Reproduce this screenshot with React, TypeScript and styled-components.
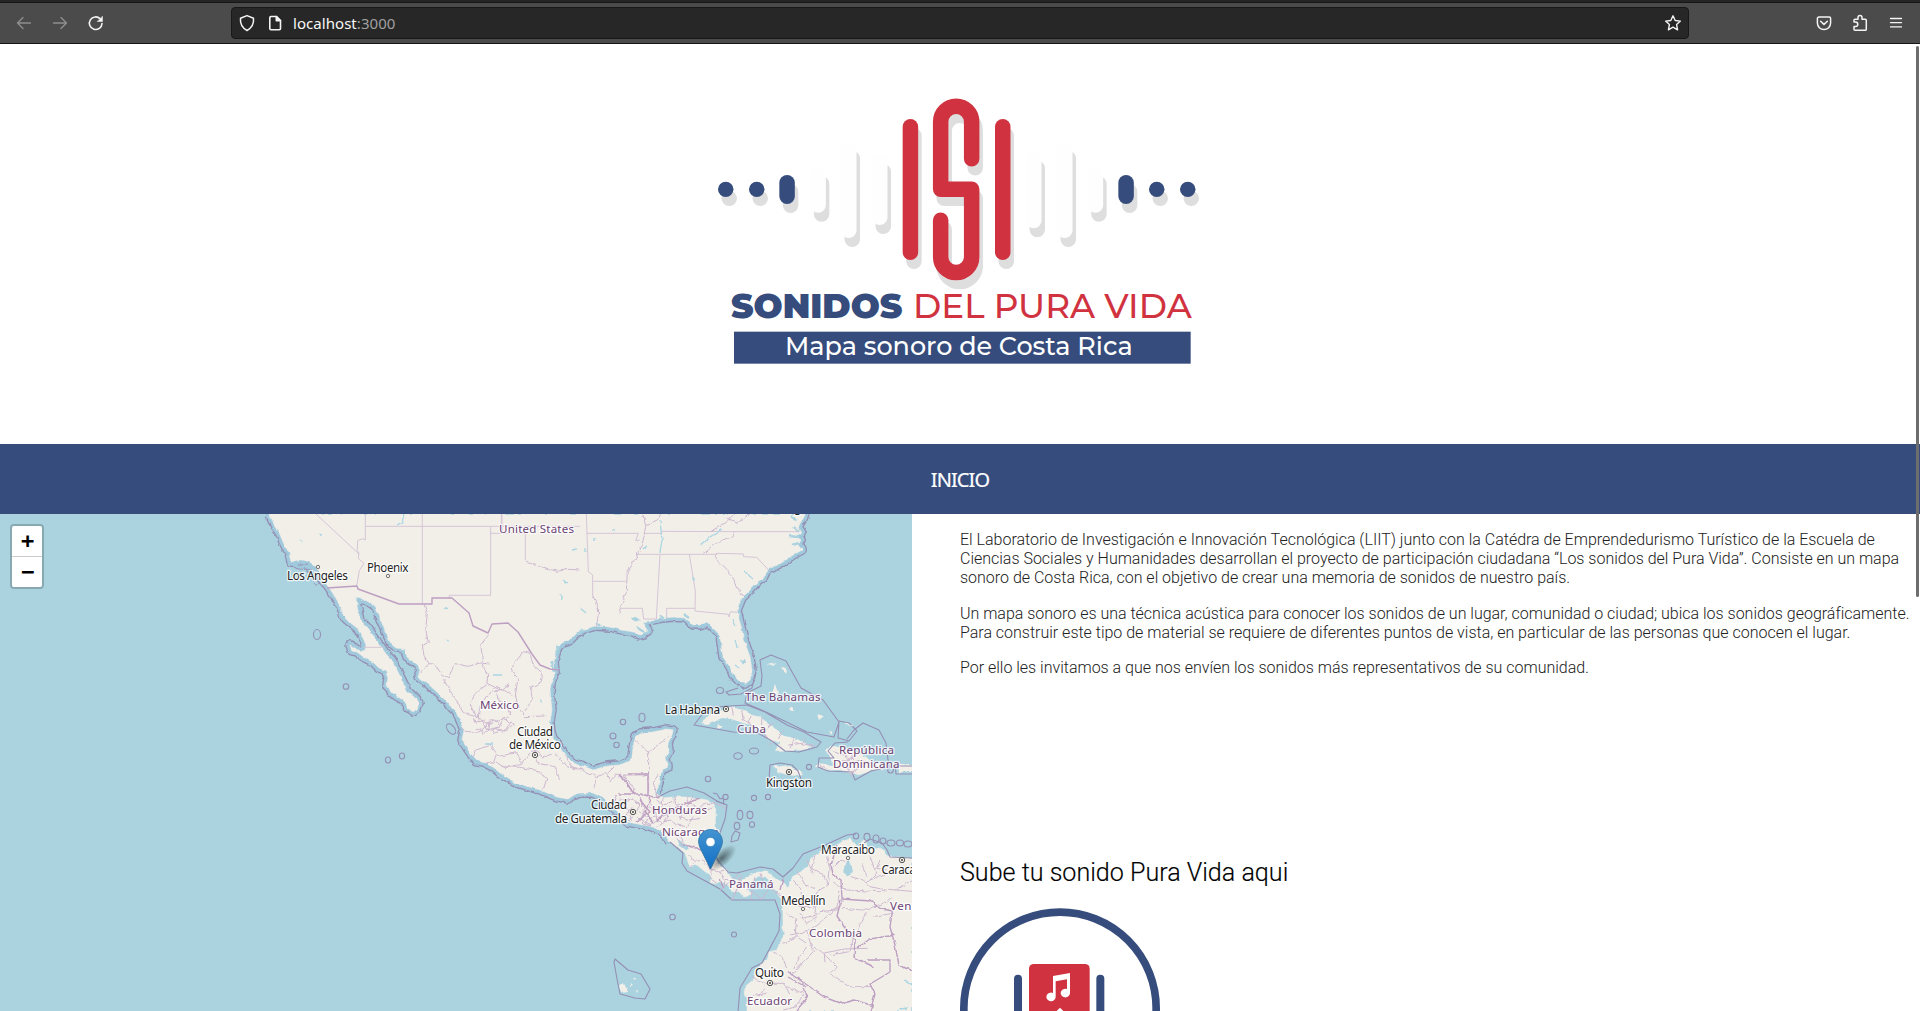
import React from 'react';
import styled, { createGlobalStyle } from 'styled-components';

const NAVY = '#354c7c';
const RED = '#d13240';
const WATER = '#aad3df';
const LAND = '#f2efe9';
const SEA_LINE = '#958fb4';
const STATE_LINE = '#cdb8d0';

const GlobalStyle = createGlobalStyle`
  * { box-sizing: border-box; }
  html, body { margin: 0; padding: 0; background: #fff; overflow: hidden; }
`;

const Window = styled.div`
  position: relative;
  display: flex;
  flex-direction: column;
  width: 1920px;
  height: 1011px;
  overflow: hidden;
  background: #fff;
  font-family: Roboto, 'Liberation Sans', sans-serif;
`;

/* ---------- browser chrome ---------- */

const Toolbar = styled.div`
  flex: none;
  display: flex;
  align-items: center;
  height: 44px;
  padding: 3px 15px 0 15px;
  background: #4b4b4b;
  border-bottom: 1px solid #151515;
  box-shadow: inset 0 2px 0 #252525, inset 0 3px 0 #161616;
`;

const NavButtons = styled.div`
  display: flex;
  align-items: center;
  gap: 18px;
  width: 216px;
`;

const Icon = styled.svg<{ $size?: number; $color?: string; $line?: number }>`
  flex: none;
  display: block;
  width: ${(p) => p.$size ?? 18}px;
  height: ${(p) => p.$size ?? 18}px;
  fill: none;
  stroke: ${(p) => p.$color ?? '#f4f4f4'};
  stroke-width: ${(p) => p.$line ?? 1.3};
  stroke-linecap: round;
  stroke-linejoin: round;
`;

const AddressBar = styled.div`
  display: flex;
  align-items: center;
  width: 1458px;
  height: 32px;
  padding: 0 6px 0 6px;
  background: #272727;
  border: 1px solid #181818;
  border-radius: 4px;
`;

const SiteIcons = styled.div`
  display: flex;
  gap: 10px;
  width: 55px;
`;

const Address = styled.span`
  flex: 1;
  color: #f7f7f7;
  font: 400 15px/20px 'Noto Sans', 'Open Sans', sans-serif;
  letter-spacing: 0.05px;
`;

const Port = styled.span`
  color: #a0a0a0;
`;

const ToolButtons = styled.div`
  display: flex;
  align-items: center;
  gap: 18px;
  margin-left: auto;
`;

const ScrollThumb = styled.div`
  position: absolute;
  top: 46px;
  right: 1px;
  width: 3px;
  height: 551px;
  border-radius: 2px;
  background: #6d6d6d;
`;

/* ---------- page ---------- */

const Header = styled.header`
  flex: none;
  display: flex;
  justify-content: center;
  height: 400px;
  padding-top: 36px;
`;

const Logo = styled.svg`
  display: block;
  width: 520px;
  height: 300px;
  font-family: Montserrat, Inter, sans-serif;
`;

const Nav = styled.nav`
  flex: none;
  display: flex;
  align-items: center;
  justify-content: center;
  height: 70px;
  background: ${NAVY};
`;

const NavLink = styled.a`
  color: #fff;
  font: 400 20px/28px 'Noto Sans', 'Open Sans', sans-serif;
  letter-spacing: -0.9px;
  padding-top: 1px;
  -webkit-text-stroke: 0.2px #fff;
`;

const Content = styled.main`
  flex: 1;
  min-height: 0;
  display: flex;
  gap: 48px;
`;

const MapPane = styled.section`
  position: relative;
  flex: none;
  width: 912px;
  height: 497px;
  overflow: hidden;
  background: ${WATER};
`;

const MapDrawing = styled.svg`
  display: block;
  width: 912px;
  height: 497px;
`;

const ZoomControl = styled.div`
  position: absolute;
  top: 10px;
  left: 10px;
  border: 2px solid rgba(0, 0, 0, 0.2);
  border-radius: 4px;
  background-clip: padding-box;
`;

const ZoomButton = styled.button<{ $last?: boolean }>`
  display: block;
  width: 30px;
  height: ${(p) => (p.$last ? 30 : 31)}px;
  padding: 0;
  border: 0;
  border-bottom: ${(p) => (p.$last ? '0' : '1px solid #ccc')};
  border-radius: ${(p) => (p.$last ? '0 0 2px 2px' : '2px 2px 0 0')};
  background: #fff;
  color: #000;
  font: bold 22px/30px 'DejaVu Sans Mono', monospace;
  text-indent: 1px;
`;

const Side = styled.section`
  flex: 1;
  display: flex;
  flex-direction: column;
  padding-top: 16px;
`;

const Intro = styled.div`
  flex: none;
  height: 328px;
`;

const Paragraph = styled.p`
  margin: 0 0 16px;
  color: #212121;
  font-size: 16px;
  font-weight: 300;
  line-height: 19.2px;
  letter-spacing: -0.008px;
  white-space: nowrap;
`;

const Heading = styled.h2`
  flex: none;
  margin: 0 0 20px;
  color: #000;
  font-size: 25.1px;
  font-weight: 300;
  line-height: 30px;
  -webkit-text-stroke: 0.15px #000;
`;

const UploadBadge = styled.svg`
  display: block;
  flex: none;
  width: 200px;
  height: 200px;
`;

/* ---------- logo ---------- */

type Bar = { x: number; y: number; h: number; fill: string };

const bars: Bar[] = [
  { x: 54, y: 305, h: 46, fill: NAVY },
  { x: 147, y: 305, h: 46, fill: NAVY },
  { x: 238, y: 285, h: 87, fill: NAVY },
  { x: 331, y: 262, h: 136, fill: '#fefefe' },
  { x: 423, y: 185, h: 289, fill: '#fefefe' },
  { x: 516, y: 225, h: 210, fill: '#fefefe' },
  { x: 608, y: 117, h: 423, fill: RED },
  { x: 885, y: 117, h: 423, fill: RED },
  { x: 978, y: 215, h: 230, fill: '#fefefe' },
  { x: 1071, y: 185, h: 289, fill: '#fefefe' },
  { x: 1163, y: 262, h: 136, fill: '#fefefe' },
  { x: 1255, y: 285, h: 87, fill: NAVY },
  { x: 1347, y: 305, h: 46, fill: NAVY },
  { x: 1440, y: 305, h: 46, fill: NAVY },
];

const S_PATH = 'M815 236V125A46.5 46.5 0 0 0 722 125V328H815V531A46.5 46.5 0 0 1 722 531V421';

const SiteLogo = () => (
  <Logo viewBox="0 0 1560 900">
    <g transform="translate(10.500 27)" fill="#dedede">
      {bars.map((b) => (
        <rect key={b.x} x={b.x} y={b.y} width="46.500" height={b.h} rx="23.200" />
      ))}
      <path d={S_PATH} fill="none" stroke="#dedede" strokeWidth="46.500" strokeLinecap="round" strokeLinejoin="round" />
    </g>
    {bars.map((b) => (
      <rect key={b.x} x={b.x} y={b.y} width="46.500" height={b.h} rx="23.200" fill={b.fill} />
    ))}
    <path d={S_PATH} fill="none" stroke={RED} strokeWidth="46.500" strokeLinecap="round" strokeLinejoin="round" />
    <text x="93" y="713" fontSize="102" fontWeight="900" fill={NAVY} textLength="514" lengthAdjust="spacingAndGlyphs">SONIDOS</text>
    <text x="639" y="713" fontSize="102" fontWeight="500" fill={RED} textLength="836" lengthAdjust="spacingAndGlyphs">DEL PURA VIDA</text>
    <rect x="102" y="755" width="1370" height="96" fill={NAVY} />
    <text x="255" y="824" fontSize="75" fontWeight="500" fill="#fff" textLength="1043" lengthAdjust="spacingAndGlyphs">Mapa sonoro de Costa Rica</text>
  </Logo>
);

/* ---------- map geometry ---------- */

const PACIFIC_NORTH =
  '268,514 271,517 275,527 279,532 283,542 289,553 291,562 297,563 302,562 308,565 313,570 320,577 327,585 332,592 337,600 342,610 344,617 347,620 352,624 357,628 363,638 366,645 365,650 360,652 355,648 350,645 352,651 357,652 365,658 373,662 379,668 385,670 388,677 387,687 391,691 395,695 403,700 408,708 413,712 417,709 419,703 416,698 413,695 407,692 405,686 402,680 397,670 392,660 386,654 382,648 375,638 368,628 360,620 358,610 356,600 357,597 367,601 376,607 378,614 380,620 384,627 385,632 388,637 390,642 397,648 405,649 407,657 418,665 420,671 418,677 427,683 437,692 447,702 452,708 457,713 461,723 464,730 462,740 467,748 473,757 477,761 483,762 493,767 500,773 507,777 514,782 523,785 540,790 557,797 568,799 574,795 580,793 593,793 603,798 613,807 627,822 643,825 653,827 662,832 670,842';

const PACIFIC_SOUTH =
  '678,847 685,853 688,862 690,867 697,865 703,870 712,877 710,882 716,884 722,882 728,885 733,892 738,891 745,897 752,895 747,888 748,883 752,880 758,876 767,878 771,883 772,889 777,892 782,900 783,913 783,927 785,934 780,942 777,950 769,952 768,958 762,963 755,970 753,980 748,984 744,992 747,1001 747,1011';

const CARIBBEAN_SOUTH =
  '912,1011 912,860 900,857 888,857 885,851 880,848 868,850 866,842 862,841 860,847 853,843 850,838 842,842 833,847 820,852 812,858 807,867 798,873 793,877 788,888 782,882 773,877 767,872 758,872 750,875 742,880 733,880 727,872 717,862 713,853 713,840 716,830 715,818 717,810 713,803 707,800 700,799 687,797 673,797 663,798';

const GULF =
  '655,795 658,787 660,777 662,770 668,767 666,757 669,750 668,743 672,735 673,730 667,729 653,732 640,733 635,737 633,748 632,758 627,762 620,765 607,766 593,770 583,766 573,763 565,755 560,748 553,738 551,732 550,723 551,715 552,710 550,690 552,680 555,673 554,660 558,647 563,642 570,640 577,633 582,630 595,626 610,627 622,630 633,632 640,635 643,634 648,631 643,622 653,620 663,618 673,617 685,618 689,621 693,625 700,625 707,622 713,628 720,635 721,643 723,657 730,667 733,675 740,682 745,684 750,680 752,670 750,657 745,643 741,627 737,610 742,598 750,590 756,583 763,578 767,570 783,562 793,555 802,550 798,545 801,540 797,537 802,533 798,527 804,517 805,514';

const Coast = ({ points }: { points: string }) => (
  <>
    <polyline points={points} fill="none" stroke={SEA_LINE} strokeWidth="9.800" strokeLinejoin="round" />
    <polyline points={points} fill="none" stroke="#a0c9dc" strokeWidth="7.200" strokeLinejoin="round" />
  </>
);

type LabelSpec = { text: string; x: number; y: number; w?: number; country?: boolean };

const labels: LabelSpec[] = [
  { text: 'Washington', x: 757, y: 512, w: 61 },
  { text: 'United States', x: 499, y: 533, w: 75, country: true },
  { text: 'Los Angeles', x: 287, y: 580, w: 61 },
  { text: 'Phoenix', x: 367, y: 572, w: 41.5 },
  { text: 'México', x: 480, y: 708.5, w: 39, country: true },
  { text: 'Ciudad', x: 517, y: 735.5, w: 36 },
  { text: 'de México', x: 509, y: 748.5, w: 52 },
  { text: 'The Bahamas', x: 745, y: 701, w: 75.5, country: true },
  { text: 'La Habana', x: 665, y: 713.5, w: 55 },
  { text: 'Cuba', x: 737, y: 733, w: 29, country: true },
  { text: 'República', x: 839, y: 754, w: 55, country: true },
  { text: 'Dominicana', x: 833, y: 767.5, w: 66.5, country: true },
  { text: 'Kingston', x: 766, y: 786.5, w: 46 },
  { text: 'Ciudad', x: 591, y: 809, w: 36 },
  { text: 'de Guatemala', x: 555, y: 822.5, w: 72 },
  { text: 'Honduras', x: 652, y: 813.5, w: 55, country: true },
  { text: 'Nicaragua', x: 662, y: 836, w: 57, country: true },
  { text: 'Panamá', x: 729, y: 888, w: 44.5, country: true },
  { text: 'Maracaibo', x: 821, y: 854, w: 54 },
  { text: 'Caracas', x: 881.5, y: 874, w: 39.5 },
  { text: 'Venezuela', x: 890, y: 910, w: 59, country: true },
  { text: 'Medellín', x: 781, y: 905, w: 44.5 },
  { text: 'Colombia', x: 809, y: 936.5, w: 53, country: true },
  { text: 'Quito', x: 755, y: 976.5, w: 29 },
  { text: 'Ecuador', x: 747, y: 1004.5, w: 45, country: true },
];

const MapLabel = styled.text<{ $country?: boolean }>`
  font: 400 ${(p) => (p.$country ? 11.6 : 11.8)}px 'Noto Sans', 'Open Sans', sans-serif;
  fill: ${(p) => (p.$country ? '#6b4273' : '#222')};
  stroke: rgba(255, 255, 255, 0.75);
  stroke-width: 2.6px;
  stroke-linejoin: round;
  paint-order: stroke;
`;

const capitals = [[535, 755], [726, 709], [789, 772], [633, 812], [902, 860], [770, 983]];
const cities = [[318, 567], [388, 576], [848, 858], [803, 909]];

const islets = [
  [317, 634.5, 3.5, 5], [346, 686.5, 2.8, 2.8], [402, 756, 2.6, 3], [388, 760, 2.6, 3],
  [623, 722, 2.7, 2.7], [642, 717.5, 3, 4.2], [613, 736, 3, 3], [616.5, 745, 2.7, 2.7],
  [720, 690.5, 3.6, 3], [738, 756, 4.2, 3.2], [754, 751, 4.6, 3], [809, 767, 2.6, 2.6],
  [708, 779, 2.7, 2.7], [725.5, 797, 2.6, 2.6], [754, 798, 2.6, 2.6], [768, 797, 2.6, 2.6],
  [740, 815, 2.8, 4.6], [750, 815, 3, 3.6], [737, 826, 2.8, 3.6], [752, 824.5, 2.6, 2.8],
  [672.5, 917, 2.8, 2.8], [734, 934.5, 2.5, 2.5], [890.5, 770, 2.8, 3],
  [856, 836, 2.7, 3], [867, 837, 3, 3.6], [876, 839, 3, 4], [883, 841, 3, 3], [891, 843, 4, 3], [900, 843, 3.5, 3], [908, 844, 4, 3],
];

const WorldMap = () => (
  <MapDrawing viewBox="0 514 912 497">
    <defs>
      <filter id="rough" filterUnits="userSpaceOnUse" x="0" y="500" width="930" height="530">
        <feTurbulence type="fractalNoise" baseFrequency="0.16" numOctaves="2" seed="4" result="n" />
        <feDisplacementMap in="SourceGraphic" in2="n" scale="3.500" xChannelSelector="R" yChannelSelector="G" />
      </filter>
      <filter id="roughDetail" filterUnits="userSpaceOnUse" x="0" y="0" width="1560" height="840">
        <feTurbulence type="fractalNoise" baseFrequency="0.06" numOctaves="2" seed="9" result="n" />
        <feDisplacementMap in="SourceGraphic" in2="n" scale="12" xChannelSelector="R" yChannelSelector="G" />
      </filter>
      <linearGradient id="pin" x1="0" y1="0" x2="0" y2="1">
        <stop offset="0" stopColor="#4394d0" />
        <stop offset="1" stopColor="#126fc6" />
      </linearGradient>
      <linearGradient id="pinEdge" x1="0" y1="0" x2="0" y2="1">
        <stop offset="0" stopColor="#3883b7" />
        <stop offset="1" stopColor="#2e6c97" />
      </linearGradient>
      <radialGradient id="pinShadow">
        <stop offset="0" stopColor="#000" stopOpacity="0.5" />
        <stop offset="1" stopColor="#000" stopOpacity="0" />
      </radialGradient>
    </defs>

    <rect y="514" width="912" height="497" fill={WATER} />

    <g fill="none" stroke={SEA_LINE} strokeWidth="1.100">
      {islets.map(([cx, cy, rx, ry]) => (
        <ellipse key={`${cx}-${cy}`} cx={cx} cy={cy} rx={rx} ry={ry} />
      ))}
      <ellipse cx="451" cy="729" rx="3.500" ry="6" transform="rotate(-38 451 729)" />
    </g>

    <g filter="url(#rough)">
      <Coast points={PACIFIC_NORTH} />
      <Coast points={GULF} />
      <polygon points={`${PACIFIC_NORTH} ${PACIFIC_SOUTH} ${CARIBBEAN_SOUTH} ${GULF}`} fill={LAND} stroke={LAND} strokeWidth="0.600" />
      {/* lakes and lagoons */}
      <path d="M848 859l4 8 1 6-5 3-5-4 2-6zM677 839l7 4 5 6-3 1-7-5zM741 660l4-1 1 4-3 2zM631 618l5-1 4 3-6 2z" fill={WATER} />
      <path d="M552 660l2 12M559 645l-3 8M583 629l-5 6M596 622l4 4M636 627l8 5M644 634l5 -2M660 616l5 3M683 614l6 4M789 536l9 1M792 545l7-2M794 527l5 5M790 516l7 4" stroke={WATER} strokeWidth="2.400" fill="none" />
      <path d="M291 563c5-4 16-4 24 3l5 8-9-5-18-1z" fill="#a0c9dc" />
      <path d="M294 567c5 4 12 1 18 3M313 580c1 4 7 7 6 1M298 565l10 0" stroke={SEA_LINE} fill="none" />
      {/* Cuba, Hispaniola, Jamaica, Puerto Rico */}
      <path d="M701 724l6-8 8-4 8-2 9-3 12 3 8 5 9 2 6 6 9 6 9 7 12 3 10 5 4 4-8 2-28 2 5-9-12-4-5-8-8-5-12-3-12-4-9-1-7 3-7 4z" fill={LAND} />
      <path d="M718 724l5 3-3 3-3-2zM774 766l12 0 13 4 4 5-6 1-10-1-9-3zM826 749l8-3 12 3 9 3 10 4 6 5 13 5-1 3-12 2-12 4-11-3-9-2-12 1-11-5 2-3 14 2-1-6zM899 764h14v8h-14z" fill={LAND} />
    </g>

    {/* maritime limits */}
    <g fill="none" stroke={SEA_LINE} strokeWidth="1.100" strokeLinejoin="round">
      <path d="M670 842l13 11-1 10 5 8 33 18 12 11h43l5 14-1 17-17 32-10 5-12 20-2 24" />
      <path d="M660 796l10-5 17-4 17 6 13 8 10 4-2 14-8 22M714 853l5 9 9 10 9 1 23-6 13 2 10 8 10-9 10-14 20-8 24-11 9-1M864 843l6-4 12 4 5 7 3 7 22 1" />
      <path d="M694 725l10-13 10-5 33-2 18 7 22 13 17 7 17 10-4 5-18 5-14-1-13-10-14-8-25-1-22-4zM760 660l11-5 15 6 15 27 22 12 16 22-5 15-27-5-41-20-21-9 2-10 14-7 1-10zM839 721l10 2 8 8-8 10-11-3zM847 739l7-9 9-7 16 7 7 13 2 17 1 7-18 4-16 9-3-8-24-1-10-4 1-9 15 0-6-7 7-8 13-1M769 780l1-15 10-2 12 2 6 6 3 8M896 766h16M895 764l1 10h16" />
      <path d="M615 959l13 11 13 4 9 15-5 10-10-1-15-4-3-15-3-17z" />
      <path d="M713 793l4 1 3 5 3-1 1 6-8-3M732 836l3-5 5 2-2 7-7 2zM738 688l-12 4 3 3 12-1 11-6 3-14" />
    </g>
    <g fill={LAND} filter="url(#rough)">
      <path d="M619 985l5-3 2 6 2 4-7 1zM630 983l2 2-2 2zM633 978l3 0-1 2zM636 990l2 1-1 2zM766 665l12-2-6 3zM781 667l5 1-1 6zM773 690l2-6 3 9-5 3zM790 706l5 5-6-2zM817 714l7 2-5 4zM829 732l4-1-2 4z" />
      <path d="M845 723l8 4M800 695l5 5" stroke={LAND} />
    </g>

    {/* state lines: western United States and northern Mexico */}
    <g transform="translate(240 510) scale(.3333)" fill="none" stroke="#d5c5d6" strokeWidth="3" strokeLinejoin="round">
      <path d="M228 12L357 132M376 12v78l-8-4-15 6-1 30 5 8-2 15 17 15-14 22-5 30-4 18M376 49H1020M547 12v270M786 12v58M752 49V256H628v10M752 70h104V150M370 412h60" />
      <g stroke={STATE_LINE} filter="url(#roughDetail)">
        <path d="M856 152l25 12 30 8 40 12 35-6 34 2" />
        <path d="M552 283l10 25-5 50 8 40-18 8 5 30 15 25-25 25M565 460l20 3 20 30 20 10 20-42 40 8 35-10 30 3M745 375l-22 30 5 60 15 30-2 25 30 15 25 8 25 15M740 525l-30 20-20 35 12 30 20 20 35 10 30-15 20-5M850 425l-30 40-4 20 18 20-8 50 10 40 20 25 60-2M850 425l20 5 10 35 28 25-4 25-35 20 10 35-25 30M610 508l30 50 30 50 45 15 5-35 20-30 20-15 30-5 20-15M665 660l40 10 25-10 15-25 20-5 20 15-30 15 5 10 35-10 20-25" />
        <path d="M700 625l10 15 15-10 10 20 15-10-5 25-15 5-10-15-15 5M770 545l5 30 25 10 10 30" />
      </g>
    </g>

    {/* state lines: eastern United States */}
    <g transform="translate(500 510) scale(.3333)" fill="none" stroke="#d5c5d6" strokeWidth="3" strokeLinejoin="round">
      <path d="M259 12L265 185l13 10v60M260 70h155l-8 22 12-2M433 70h52v-6l216 1h196M412 133H650M480 133L469 327M568 133l18 110-1 60 100 10 2 8 4-16 20 2M586 295H500v30M280 214h97M362 295h65l4 32h38M650 130l80 2 0 8 40 2 38 40M4 12v36" />
      <g stroke={STATE_LINE} filter="url(#roughDetail)">
        <path d="M278 255l18 45-6 48M428 12l10 35-12 60-18 35-26 40-3 65-20 50 3 18M438 47l35-18 10-17M702 65l-2 15-60 25-30 25M632 65l50-32 20-20M650 130l-5 12 40 40 40 72 8 2M680 25l35 12 35-25" />
      </g>
    </g>

    {/* central Mexico and Central America */}
    <g transform="translate(440 660) scale(.3333)" fill="none" stroke={STATE_LINE} strokeWidth="3" filter="url(#roughDetail)">
      <path d="M100 180l30 8 10 22 35-8 15-25 30 15-20 20-35-5M150 255l-40 15-10 20M150 255l20 25-10 30-20-3M170 290l60-12 15 35-50 10-25-15M185 320l50 2 60 10 25 25-10 32M245 313l25-35 20-5 20 20 25-10M280 265l15 45 50 10 15 40M345 280l35 40 45 10 45 20-10 40M375 285l20 35 35 10M470 350l30-10 20-20M500 340l10 25 20-20 30 10 25 35M583 240l43 38 60-50M626 278v120M550 345h75M550 345l10 20 25 40" />
      <path d="M530 405l-15 30M560 415l30 10 20 20 20-5 15 20M545 430l20 20 10 35M600 410l10 30 5 30-20 15M590 470l20 20 20 5M630 430l40 40 20-10 30-15 30 20M650 420l20 15 30-12 25 15M690 440l-10 40-30 20M720 470l30 10 30-5M740 410l5 30 30 10M760 470l-20 30-30-5M640 480l-10 20M795 430l-15 15 40 0M655 345l-15 20 10 40" />
      <path d="M800 430l25 0 30 12M555 490l25-20M610 500l15-25 30-5M540 420h40l20 15-15 25M575 440l-20 30M620 450l-15 30 30 15M645 440l5 40 20 10M670 410l-5 35M700 410l15 30M760 405l-10 25 30 15M600 455l20 15M660 490l30-10 20 15M730 450l-10 30" />
    </g>

    {/* Costa Rica and Panama provinces */}
    <g transform="translate(560 800) scale(.3333)" fill="none" stroke={STATE_LINE} strokeWidth="3" filter="url(#roughDetail)">
      <path d="M385 165l20 20 25-5 20 25M400 190l-10 15M455 205l-5 30 20 15M440 200l30 15 25-5M480 215l15 30-5 20M495 240l35 10 15-25M530 265l-5 20M560 270l20-15 5-25M600 220l15 30M640 245l-5 30 30 10M350 110l20 30M330 100l30 5 10 20" />
    </g>

    {/* Caribbean provinces */}
    <g transform="translate(660 680) scale(.3333)" fill="none" stroke={STATE_LINE} strokeWidth="3" filter="url(#roughDetail)">
      <path d="M215 82l5 25M245 90l5 30 20 10M275 105l-10 20 25 30M305 115l0 40 20 20M340 125l-25 30M375 150l-25 25-20 20M405 170l-15 35M435 178l-10 20M385 195l40-5 40 10M590 225l-30 20 10 30M600 250l-15 25M545 240l20 10 40-10 30 10M520 215l30 10 20-15M480 255l20 10M555 215l10 30M575 220l5 45M610 240l-5 25M560 260l15 30 10-25" />
    </g>

    {/* South America departments */}
    <g transform="translate(560 800) scale(.3333)" fill="none" stroke={STATE_LINE} strokeWidth="3">
      <g filter="url(#roughDetail)">
        <path d="M765 165l-10 40 35 20 15 30-35 20-10 40 10 30-45 10M800 170l10 40-5 45M850 300l-20 30-50 5-15 30M845 325l60 5 60-15 30-20M840 275l-10 50-60 50-30 20-50 10M870 230l40 10 20 20 50 10M930 170l20 50-30 30M740 395l20 60-30 30-35 40M760 440l40 30 30 30-20 20 60 40 60 0M810 465l60-10 10-40 40-80M700 510l20-40 20-30M640 455l30 20 10 30M690 300l30 20 50 0M575 530l40 20-10 30M620 550l50 0 20 30M560 590l60-10M680 560l50 20-20 40-40 10M1000 340l-60 10M980 220l-50 20M1056 240l-50 30M820 250l40 20 100 5" />
        <path d="M715 215l20 40 30 10M700 240l25 30-5 40M740 180l20 40M680 340l30 20-5 50M720 340l20 30 30-20M670 430l40-20 30 20M905 190l15 40M820 200l20-20 20 5M960 180l-10 25 30 5" />
      </g>
      <path d="M480 270l60-50M515 300l30-60M575 298v-25l30 25 20-30M795 487l-2-28 60-12 70-2M985 268l71 6" />
    </g>

    {/* national borders */}
    <g fill="none" stroke="#bd9fc2" strokeWidth="1.400" strokeLinejoin="round">
      <path d="M327 588l30-2 1 3 41 15h33v-6h20l17 15 4 13 15 7 4-9 16-1 10 9 14 22 8 11 10 4 9 1" />
      <g filter="url(#rough)">
        <path d="M628 774h21M648 776v20M620 774l14 20M618 794h22l20 4M616 797l-3 10M640 800l10 12-14 10M651 797l-6 14 8 12 11-8 12-7 14-6 10-4M684 845l12 3 12 5M720 878l3 10M783 878l-3 12" />
        <path d="M837 845l-6 20 2 9 8 6 1 19 28 2 11 8 12 2M841 900l-4 16 12 18 6 6-1 17 20 10M788 972l22 15 14 10 18 7 12-4 20 6M803 987l5 10-12 14M788 977l18 10M893 907l-3 20 5 18 4 20 13 6M868 960h22l0 12-20 12 5 10-5 17M895 935l-25 4-13 9" />
      </g>
    </g>

    {/* rivers and lakes */}
    <g fill="none" stroke="#a9d6e2" strokeWidth="1.300" filter="url(#rough)">
      <path d="M397 525l5-3 3-8M300 540l3 1M320 534l1 2M268 516l4 5M572 550l5-1M585 548v4M563 580l4 3M580 608l6 5M643 549l4-3M660 520l2 20-2 12M700 545l10-8 12-8M745 572l8 7M692 578l3 3M733 620l3 6M735 640l2 8M493 675l9 0M485 744l8 0M540 699v4M445 608l3 2M446 640l3 1M560 594l2 6M905 980l7 5M900 1009l8-1M735 665l4 3M593 540l3 0M612 530l3 1" />
    </g>

    <g fill="#f2efe9" stroke="#444" strokeWidth="0.900">
      {cities.map(([cx, cy]) => (
        <circle key={cx} cx={cx} cy={cy} r="1.700" stroke="#666" />
      ))}
      {capitals.map(([cx, cy]) => (
        <React.Fragment key={cx}>
          <circle cx={cx} cy={cy} r="2.700" />
          <circle cx={cx} cy={cy} r="1" fill="#444" stroke="none" />
        </React.Fragment>
      ))}
    </g>

    {labels.map((l) => (
      <MapLabel key={`${l.text}${l.y}`} x={l.x} y={l.y} $country={l.country} textLength={l.w}>
        {l.text}
      </MapLabel>
    ))}

    <ellipse cx="722" cy="858" rx="18" ry="8" fill="url(#pinShadow)" transform="rotate(-42 722 858)" />
    <g transform="translate(698 829)">
      <path d="M12.5 .5C6 .5 .6 5.900 .6 12.600c0 2.600 1.500 6.300 2.700 8.700L12.500 40l9.200-18.700c1.200-2.400 2.700-5.900 2.700-8.700C24.400 5.900 19 .5 12.500 .5z" fill="url(#pin)" stroke="url(#pinEdge)" />
      <circle cx="12.500" cy="13" r="4.600" fill="#fff" stroke="#2f7fb9" strokeWidth=".6" />
    </g>
  </MapDrawing>
);

const App = () => (
  <>
    <GlobalStyle />
    <Window>
      <Toolbar>
        <NavButtons>
          <Icon viewBox="0 0 18 18" $color="#8e8e8e"><path d="M15.500 9H2.500M8 3.500L2.500 9 8 14.500" /></Icon>
          <Icon viewBox="0 0 18 18" $color="#8e8e8e"><path d="M2.500 9h13M10 3.500L15.500 9 10 14.500" /></Icon>
          <Icon viewBox="0 0 18 18" $line={1.6}>
            <path d="M15 9.500A6.300 6.300 0 1 1 13.200 4.800" />
            <path d="M15.500 2.500v5h-5z" fill="#f4f4f4" strokeWidth="0.500" />
          </Icon>
        </NavButtons>
        <AddressBar>
          <SiteIcons>
            <Icon viewBox="0 0 18 18" $line={1.5}>
              <path d="M9 1.600L15.500 4.200C16 9 14.500 13.500 9 16.500C3.500 13.500 2 9 2.500 4.200z" />
            </Icon>
            <Icon viewBox="0 0 18 18" $line={1.6}>
              <path d="M5 2.500h5.500l4 4v8a1.200 1.200 0 0 1-1.200 1.200H5a1.200 1.200 0 0 1-1.200-1.200V3.700A1.200 1.200 0 0 1 5 2.500z" />
              <path d="M10.300 2.500v4.200h4.200z" fill="#f4f4f4" />
            </Icon>
          </SiteIcons>
          <Address>localhost<Port>:3000</Port></Address>
          <Icon viewBox="0 0 18 18" $line={1.4}>
            <path d="M9 1.800l2.200 4.700 5.200.6-3.800 3.500 1 5.200L9 13.200l-4.600 2.600 1-5.200L1.600 7.100l5.200-.6z" />
          </Icon>
        </AddressBar>
        <ToolButtons>
          <Icon viewBox="0 0 18 18" $line={1.5}>
            <path d="M3.800 3h10.400a1.400 1.400 0 0 1 1.400 1.400V9A6.600 6.600 0 0 1 2.400 9V4.400A1.400 1.400 0 0 1 3.800 3z" />
            <path d="M5.600 7.200L9 10.400l3.400-3.200" />
          </Icon>
          <Icon viewBox="0 0 18 18" $line={1.5}>
            <path d="M3 8V6.200a1 1 0 0 1 1-1h3V3.400a2 2 0 0 1 4 0v1.800h3.300a1 1 0 0 1 1 1v9a1 1 0 0 1-1 1H4a1 1 0 0 1-1-1v-2.600h1.500a2 2 0 0 0 0-4.600z" />
          </Icon>
          <Icon viewBox="0 0 18 18" $line={1.3}><path d="M3.500 4.500h11M3.500 8.700h11M3.500 12.900h11" /></Icon>
        </ToolButtons>
      </Toolbar>

      <Header>
        <SiteLogo />
      </Header>

      <Nav>
        <NavLink>INICIO</NavLink>
      </Nav>

      <Content>
        <MapPane>
          <WorldMap />
          <ZoomControl>
            <ZoomButton>+</ZoomButton>
            <ZoomButton $last>−</ZoomButton>
          </ZoomControl>
        </MapPane>

        <Side>
          <Intro>
            <Paragraph>
              El Laboratorio de Investigación e Innovación Tecnológica (LIIT) junto con la Catédra de Emprendedurismo Turístico de la Escuela de<br />
              Ciencias Sociales y Humanidades desarrollan el proyecto de participación ciudadana “Los sonidos del Pura Vida”. Consiste en un mapa<br />
              sonoro de Costa Rica, con el objetivo de crear una memoria de sonidos de nuestro país.
            </Paragraph>
            <Paragraph>
              Un mapa sonoro es una técnica acústica para conocer los sonidos de un lugar, comunidad o ciudad; ubica los sonidos geográficamente.<br />
              Para construir este tipo de material se requiere de diferentes puntos de vista, en particular de las personas que conocen el lugar.
            </Paragraph>
            <Paragraph>Por ello les invitamos a que nos envíen los sonidos más representativos de su comunidad.</Paragraph>
          </Intro>
          <Heading>Sube tu sonido Pura Vida aqui</Heading>
          <UploadBadge viewBox="0 0 600 600">
            <circle cx="300" cy="301" r="288.500" fill="#fff" stroke={NAVY} strokeWidth="23" />
            <rect x="162" y="200" width="24" height="200" rx="12" fill={NAVY} />
            <rect x="409" y="200" width="24" height="200" rx="12" fill={NAVY} />
            <rect x="207" y="168" width="182" height="230" rx="14" fill={RED} />
            <path d="M279 204l51-9v60a14 13 0 1 1-9-12v-29l-34 6v46a14 13 0 1 1-8-11z" fill="#fff" />
            <path d="M300 299l30 30h-60z" fill="#fff" />
          </UploadBadge>
        </Side>
      </Content>
      <ScrollThumb />
    </Window>
  </>
);

export default App;
